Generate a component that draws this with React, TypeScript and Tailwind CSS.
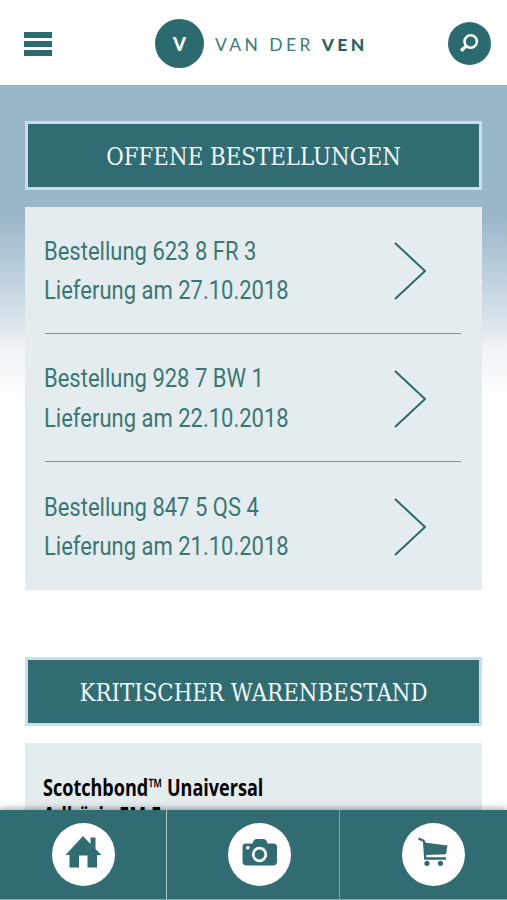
import type { ReactNode } from "react";

const orders = [
  { number: "623 8 FR 3", delivery: "27.10.2018" },
  { number: "928 7 BW 1", delivery: "22.10.2018" },
  { number: "847 5 QS 4", delivery: "21.10.2018" },
];

function Header() {
  return (
    <header className="flex h-[85px] items-center bg-white pt-[2px] pr-[16px] pl-[24px]">
      <button aria-label="Menü" className="flex w-[28px] flex-col gap-[3.5px] pt-px">
        <span className="h-[5.5px] bg-[#2b6b70]" />
        <span className="h-[5.5px] bg-[#2b6b70]" />
        <span className="h-[5.5px] bg-[#2b6b70]" />
      </button>
      <div className="ml-[103px] flex items-center">
        <span className="flex h-[49px] w-[49px] items-center justify-center rounded-full bg-[#2b6b70] pt-[2px] font-['Lato',sans-serif] text-[18.5px] font-black text-white">
          V
        </span>
        <span className="mt-[3px] ml-[11px] font-['Lato',sans-serif] text-[17.5px] tracking-[3.4px] whitespace-nowrap text-[#3f797b]">
          VAN DER <b className="font-black text-[#246468]">VEN</b>
        </span>
      </div>
      <button aria-label="Suche" className="ml-auto h-[43px] w-[43px] rounded-full bg-[#2b6b70]">
        <svg viewBox="0 0 43 43" className="h-full w-full" fill="none" stroke="#fff">
          <circle cx="22.7" cy="19.5" r="6.2" strokeWidth="2.6" />
          <path d="M18.5 23.6L13.2 28.8" strokeWidth="3.4" />
        </svg>
      </button>
    </header>
  );
}

function SectionTitle({ children }: { children: ReactNode }) {
  return (
    <h2 className="flex h-[69px] items-center justify-center border-[3px] border-[#c6def0] bg-[#306c71] pt-[2px] text-[#f0f8fb]">
      <span className="scale-x-[0.89] font-['DejaVu_Serif',serif] text-[24px] leading-[32px] whitespace-nowrap">
        {children}
      </span>
    </h2>
  );
}

function OrderRow({ number, delivery }: { number: string; delivery: string }) {
  return (
    <li className="flex h-[128px] items-center justify-between border-b border-[#6d9f9c] pt-[2px] pr-[34px] first:h-[127px] last:border-0">
      <p className="-ml-[1.5px] w-[260px] origin-left scale-x-[0.88] font-['Roboto',sans-serif] text-[25px] leading-[39.5px] whitespace-nowrap text-[#3a7774]">
        Bestellung {number}
        <br />
        Lieferung am {delivery}
      </p>
      <svg width="33" height="60" viewBox="0 0 33 60" fill="none" stroke="#2b6b6d" strokeWidth="2">
        <path d="M1 2L31 30L1 58" />
      </svg>
    </li>
  );
}

function TabBar() {
  return (
    <nav className="fixed bottom-0 left-0 flex h-[90px] w-[507px] border-b border-[#7fb0b8] bg-[#306c71] shadow-[0_-1px_7px_rgba(0,0,0,0.4)]">
      <a className="flex w-[167px] items-center justify-center border-r border-[#a9c5c7]">
        <svg width="63" height="63" viewBox="0 0 63 63">
          <circle cx="31.5" cy="31.5" r="31.5" fill="#fff" />
          <path
            fill="#306c71"
            d="M13.5 32L31 13l7.5 8v-6.5h5V26l6 6H45v12.5h-9.5v-12H27v12h-9.5V32z"
          />
        </svg>
      </a>
      <a className="flex w-[173px] items-center justify-center border-r border-[#7aa5a9] pl-[12px]">
        <svg width="63" height="63" viewBox="0 0 63 63">
          <circle cx="31.5" cy="31.5" r="31.5" fill="#fff" />
          <path
            fill="#306c71"
            d="M18 20.5h6.5c.5-3 2-4.5 4.5-4.5h6c2.5 0 4 1.5 4.5 4.5h6q3.500 0 3.500 3.500v14.500q0 4-4 4H18.500q-4 0-4-4V24q0-3.500 3.500-3.500z"
          />
          <circle cx="31.5" cy="31.5" r="6.3" fill="#306c71" stroke="#fff" strokeWidth="2.8" />
          <circle cx="19.8" cy="24.8" r="1.8" fill="#fff" />
        </svg>
      </a>
      <a className="flex flex-1 items-center justify-center pl-[20px]">
        <svg width="63" height="63" viewBox="0 0 63 63">
          <circle cx="31.5" cy="31.5" r="31.5" fill="#fff" />
          <path fill="#306c71" d="M22 19.5l23.5 3-1.500 8.700-21 .8z" />
          <path
            d="M16.5 15.500l4.500 2q1 .5 1.200 2l1.100 16H44"
            fill="none"
            stroke="#306c71"
            strokeWidth="2.4"
          />
          <circle cx="25" cy="40.3" r="2.600" fill="#306c71" />
          <circle cx="38.5" cy="40.3" r="2.600" fill="#306c71" />
        </svg>
      </a>
    </nav>
  );
}

export default function App() {
  return (
    <div className="h-[900px] w-[507px] overflow-hidden bg-white">
      <Header />
      <main className="h-[815px] bg-[linear-gradient(#9ab6c9_0,#9ab6c9_130px,#d8e3eb_235px,#f0f4f8_265px,#ffffff_320px)] px-[25px] pt-[36px]">
        <SectionTitle>OFFENE BESTELLUNGEN</SectionTitle>
        <ul className="mt-[17px] h-[383px] bg-[#e4ecf0] pr-[21px] pl-[20px]">
          {orders.map((order) => (
            <OrderRow key={order.number} {...order} />
          ))}
        </ul>
        <div className="mt-[67px]">
          <SectionTitle>KRITISCHER WARENBESTAND</SectionTitle>
        </div>
        <div className="mt-[17px] h-[200px] bg-[#e4ecee] pt-[30px] pl-[18px] font-['Open_Sans',sans-serif] text-[24px] leading-[28px] font-bold text-black">
          <p className="origin-left scale-x-[0.752] whitespace-nowrap">
            Scotchbond™ Unaiversal
            <br />
            Adhäsiv EM E
          </p>
        </div>
      </main>
      <TabBar />
    </div>
  );
}
